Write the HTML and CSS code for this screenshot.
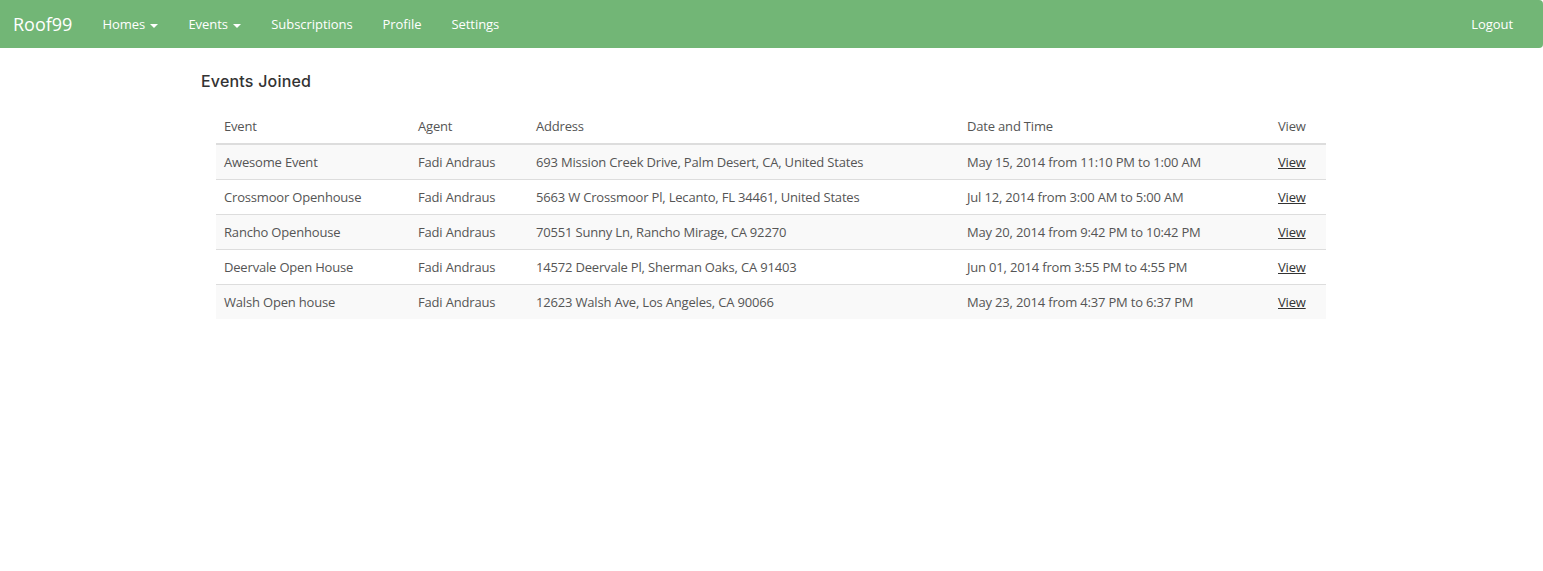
FILE: index.html
```html
<!DOCTYPE html>
<html>
<head>
<meta charset="utf-8">
<title>Roof99</title>
<link rel="stylesheet" href="styles.css">
</head>
<body>
<nav class="navbar">
  <a class="brand" href="#">Roof99</a>
  <ul class="nav">
    <li><a href="#">Homes <span class="caret"></span></a></li>
    <li><a href="#">Events <span class="caret"></span></a></li>
    <li><a href="#">Subscriptions</a></li>
    <li><a href="#">Profile</a></li>
    <li><a href="#">Settings</a></li>
  </ul>
  <ul class="nav nav-right">
    <li><a href="#">Logout</a></li>
  </ul>
</nav>
<main class="container">
  <h3 class="title">Events Joined</h3>
  <div class="table-wrap">
    <table class="table">
      <thead>
        <tr>
          <th class="c-event">Event</th>
          <th class="c-agent">Agent</th>
          <th class="c-addr">Address</th>
          <th class="c-date">Date and Time</th>
          <th class="c-view">View</th>
        </tr>
      </thead>
      <tbody>
        <tr><td>Awesome Event</td><td>Fadi Andraus</td><td>693 Mission Creek Drive, Palm Desert, CA, United States</td><td>May 15, 2014 from 11:10 PM to 1:00 AM</td><td><a href="#">View</a></td></tr>
        <tr><td>Crossmoor Openhouse</td><td>Fadi Andraus</td><td>5663 W Crossmoor Pl, Lecanto, FL 34461, United States</td><td>Jul 12, 2014 from 3:00 AM to 5:00 AM</td><td><a href="#">View</a></td></tr>
        <tr><td>Rancho Openhouse</td><td>Fadi Andraus</td><td>70551 Sunny Ln, Rancho Mirage, CA 92270</td><td>May 20, 2014 from 9:42 PM to 10:42 PM</td><td><a href="#">View</a></td></tr>
        <tr><td>Deervale Open House</td><td>Fadi Andraus</td><td>14572 Deervale Pl, Sherman Oaks, CA 91403</td><td>Jun 01, 2014 from 3:55 PM to 4:55 PM</td><td><a href="#">View</a></td></tr>
        <tr><td>Walsh Open house</td><td>Fadi Andraus</td><td>12623 Walsh Ave, Los Angeles, CA 90066</td><td>May 23, 2014 from 4:37 PM to 6:37 PM</td><td><a href="#">View</a></td></tr>
      </tbody>
    </table>
  </div>
</main>
</body>
</html>
```
FILE: styles.css
```css
* { box-sizing: border-box; }
body {
  margin: 0;
  font-family: "Open Sans", "Liberation Sans", sans-serif;
  font-size: 13px;
  line-height: 1.42857;
  color: #555;
  background: #fff;
}
a { color: inherit; }
.navbar {
  display: flex;
  align-items: center;
  height: 48px;
  background: #72b676;
  border-bottom-right-radius: 4px;
  border-top-right-radius: 4px;
  padding: 0 15px 0 0;
}
.brand {
  display: block;
  padding: 0 15px 0 13px;
  font-size: 18px;
  line-height: 48px;
  color: #fff;
  text-decoration: none;
}
.nav {
  display: flex;
  list-style: none;
  margin: 0;
  padding: 0;
}
.nav a {
  display: block;
  padding: 0 15px;
  line-height: 48px;
  color: #fff;
  text-decoration: none;
  letter-spacing: -0.05px;
}
.nav-right { margin-left: auto; }
.caret {
  display: inline-block;
  width: 0;
  height: 0;
  margin-left: 2px;
  vertical-align: middle;
  border-top: 4px solid #fff;
  border-left: 4px solid transparent;
  border-right: 4px solid transparent;
}
.container {
  width: 1141px;
  margin: 0 auto;
}
.title {
  margin: 21px 0 16px;
  font-family: "Inter", "Liberation Sans", sans-serif;
  font-size: 16px;
  font-weight: 500;
  line-height: 24px;
  color: #333;
  letter-spacing: 0.2px;
}
.table-wrap { padding: 0 16px 0 15px; }
.table {
  width: 100%;
  border-collapse: collapse;
  border-spacing: 0;
  letter-spacing: -0.18px;
}
.table th {
  text-align: left;
  font-weight: 400;
  padding: 8px;
  line-height: 18px;
  border-bottom: 2px solid #ddd;
}
.table td {
  padding: 8px;
  line-height: 18px;
  border-top: 1px solid #ddd;
}
.table tbody tr:first-child td { border-top: 0; }
.table tbody tr:nth-child(odd) { background: #f9f9f9; }
.table td a { color: #333; text-decoration: underline; }
.c-event { width: 194px; }
.c-agent { width: 118px; }
.c-addr { width: 431px; }
.c-date { width: 311px; }
```
